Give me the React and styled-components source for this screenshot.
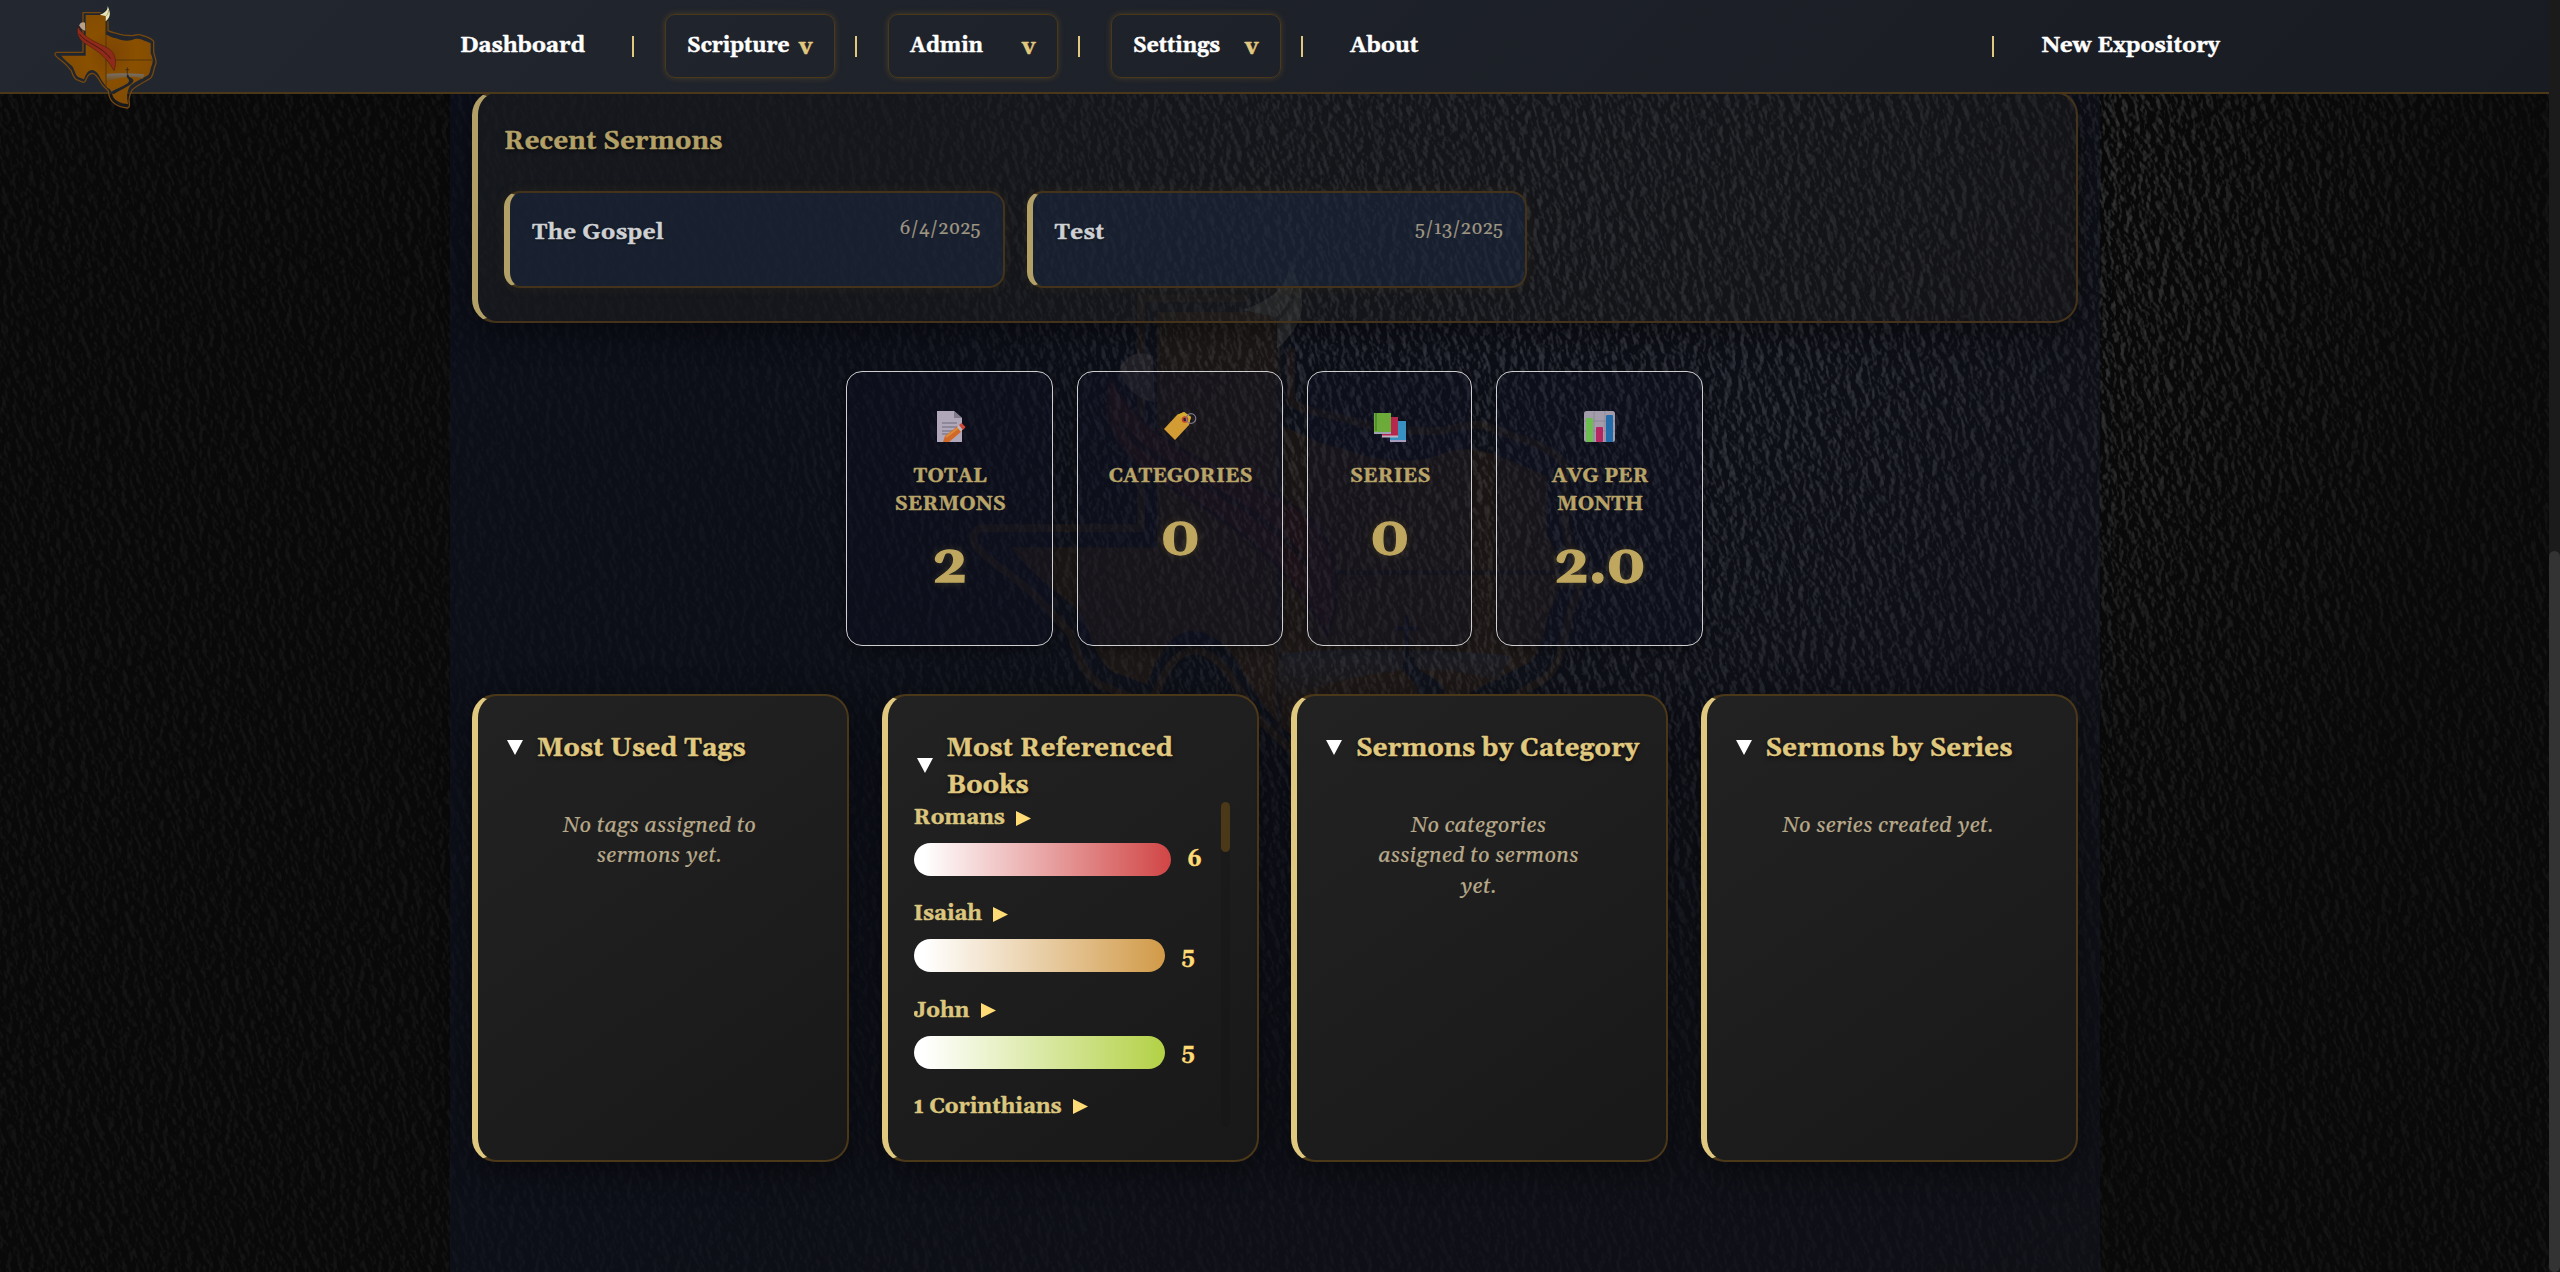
import React from 'react';
import styled, { createGlobalStyle } from 'styled-components';

const gold = '#e0c97f';
const bronze = '#4a3819';

const GlobalStyle = createGlobalStyle`
  * { box-sizing: border-box; }
  body { margin: 0; background: #090909; overflow: hidden; }
  #root { font-family: Georgia, Gelasio, "DejaVu Serif", serif; }
`;

const Page = styled.div`
  position: relative;
  display: flex;
  width: 2560px;
  height: 1272px;
  overflow: hidden;
  color: #fff;
`;

const Column = styled.div`
  position: relative;
  display: flex;
  flex-direction: column;
  width: 2549px;
  height: 1272px;
  isolation: isolate;
`;

const Leather = styled.svg`
  position: absolute;
  inset: 0;
  width: 2549px;
  height: 1272px;
  z-index: -3;
  mask-image: radial-gradient(ellipse 900px 980px at 1600px 200px, #000 0%, rgba(0,0,0,0.85) 35%, rgba(0,0,0,0.3) 78%, rgba(0,0,0,0.16) 100%);
`;

const Watermark = styled.div`
  position: absolute;
  z-index: -2;
  left: 883px;
  top: 225px;
  width: 780px;
  height: 672px;
  opacity: 0.22;
  svg { width: 100%; height: 100%; }
`;

const NavBar = styled.nav`
  position: relative;
  z-index: 2;
  flex: none;
  display: flex;
  align-items: center;
  height: 94px;
  padding: 0 329px 0 460px;
  border-bottom: 2px solid ${bronze};
  background: linear-gradient(135deg, #23272f 0%, #181b22 100%);
`;

const Brand = styled.div`
  position: absolute;
  left: 40px;
  top: 0;
  width: 130px;
  height: 116px;
  svg { width: 100%; height: 100%; }
`;

const NavLink = styled.a`
  font-size: 22px;
  font-weight: 700;
  line-height: 30px;
  padding-bottom: 1px;
  white-space: nowrap;
  -webkit-text-stroke: 0.45px currentColor;
  margin: ${p => p.$margin || 0};
`;

const Divider = styled.span`
  width: 2px;
  height: 21px;
  margin: ${p => p.$margin || '1px 30.5px 0 20.5px'};
  background: ${gold};
`;

const NavSelect = styled.div`
  display: flex;
  align-items: center;
  justify-content: space-between;
  width: 170px;
  height: 64px;
  padding: 0 21.5px 0 21.5px;
  border: 1px solid ${bronze};
  border-radius: 10px;
  box-shadow: 0 0 6px rgba(160, 120, 50, 0.32);
  font-size: 21px;
  font-weight: 700;
  line-height: 30px;
  -webkit-text-stroke: 0.45px currentColor;
`;

const SelectLabel = styled.span`
  padding-bottom: 1px;
`;

const Chevron = styled.span`
  color: ${gold};
  padding-top: 3px;
  font-size: 23px;
`;

const Main = styled.main`
  flex: 1;
  display: flex;
  flex-direction: column;
  align-items: stretch;
  width: 1650px;
  margin: -3px auto 0;
  padding: 0 22px 0 22.5px;
  background: linear-gradient(135deg, rgba(14, 20, 42, 0.46), rgba(22, 24, 38, 0.46));
`;

const RecentPanel = styled.section`
  flex: none;
  height: 232px;
  padding: 29.5px 26px;
  border: 2px solid #44331a;
  border-left: 6px solid #b3a067;
  border-radius: 24px;
  background: linear-gradient(135deg, rgba(34, 36, 34, 0.42), rgba(29, 27, 24, 0.34));
  box-shadow: 0 8px 32px rgba(0, 0, 0, 0.45);
`;

const PanelTitle = styled.h2`
  margin: 0;
  font-size: 25.6px;
  font-weight: 700;
  line-height: 37px;
  letter-spacing: 0.25px;
  color: ${p => (p.$dim ? '#b3a067' : gold)};
  text-shadow: 0 2px 4px rgba(0, 0, 0, 0.7);
  -webkit-text-stroke: 0.45px currentColor;
`;

const SermonGrid = styled.div`
  display: grid;
  grid-template-columns: repeat(3, 1fr);
  gap: 22px;
  margin-top: 31.5px;
`;

const SermonCard = styled.article`
  display: flex;
  justify-content: space-between;
  align-items: flex-start;
  height: 97px;
  padding: 22.4px 22px 0 22px;
  border: 2px solid #44331a;
  border-left: 6px solid #b3a067;
  border-radius: 16px;
  background: rgba(27, 40, 64, 0.54);
  box-shadow: 0 0 12px rgba(120, 90, 30, 0.16);
`;

const SermonTitle = styled.span`
  padding-top: 1.5px;
  font-size: 22.4px;
  font-weight: 700;
  line-height: 31px;
  letter-spacing: 0.4px;
  color: #ced0d3;
  text-shadow: 0 1px 3px rgba(0, 0, 0, 0.6);
  -webkit-text-stroke: 0.45px currentColor;
`;

const SermonDate = styled.span`
  font-size: 18.7px;
  line-height: 27px;
  color: #9f9682;
  -webkit-text-stroke: 0.2px currentColor;
`;

const StatRow = styled.section`
  display: flex;
  justify-content: center;
  gap: 24px;
  margin-top: 48px;
`;

const StatCard = styled.article`
  display: flex;
  flex-direction: column;
  align-items: center;
  width: ${p => p.$width}px;
  height: 275px;
  padding: 37px 20px 0;
  border: 1px solid #cfcfcf;
  border-radius: 16px;
  background: rgba(14, 18, 36, 0.3);
  box-shadow: 0 4px 14px rgba(0, 0, 0, 0.4);
`;

const StatIcon = styled.svg`
  width: 34px;
  height: 34px;
  opacity: 0.92;
`;

const StatLabel = styled.div`
  margin-top: 19px;
  padding-left: 1px;
  font-size: 20px;
  font-weight: 700;
  line-height: 28px;
  letter-spacing: 0.15px;
  text-align: center;
  color: #b9a468;
  -webkit-text-stroke: 0.45px currentColor;
`;

const StatValue = styled.div`
  margin-top: 15px;
  font-size: 55px;
  font-weight: 700;
  line-height: 67px;
  color: #bfa75f;
  text-shadow: 0 0 8px rgba(190, 160, 70, 0.3);
  -webkit-text-stroke: 1.3px currentColor;
`;

const InsightGrid = styled.section`
  display: grid;
  grid-template-columns: repeat(4, 1fr);
  gap: 32.5px;
  margin-top: 48px;
`;

const InsightCard = styled.article`
  display: flex;
  flex-direction: column;
  height: 468px;
  padding: 34px 26px 0;
  border: 2px solid ${bronze};
  border-left: 6px solid ${gold};
  border-radius: 24px;
  background: linear-gradient(145deg, #222222 0%, #1d1e1d 45%, #181818 100%);
  box-shadow: 0 8px 32px rgba(0, 0, 0, 0.45);
`;

const InsightHeader = styled.header`
  display: flex;
  align-items: center;
  gap: 14px;
  padding-left: 3px;
`;

const Caret = styled.svg`
  flex: none;
  width: 16px;
  height: 15px;
  margin-bottom: 3px;
  fill: #fff;
`;

const EmptyNote = styled.p`
  width: 222px;
  margin: 44px auto 0;
  position: relative;
  left: -3px;
  font-size: 21.6px;
  font-style: italic;
  line-height: 30.4px;
  letter-spacing: 0.2px;
  text-align: center;
  color: #b8a88a;
  -webkit-text-stroke: 0.2px currentColor;
`;

const BookScroller = styled.div`
  display: flex;
  justify-content: space-between;
  height: 325px;
  margin-top: -2px;
`;

const BookList = styled.div`
  flex: none;
  width: 300px;
  overflow: hidden;
`;

const ScrollTrack = styled.div`
  width: 9px;
  height: 100%;
  margin-right: 1px;
  border-radius: 5px;
  background: rgba(0, 0, 0, 0.08);
`;

const ScrollThumb = styled.div`
  height: 50px;
  border-radius: 5px;
  background: ${bronze};
`;

const Book = styled.div`
  height: 96.3px;
`;

const BookName = styled.div`
  display: flex;
  align-items: center;
  gap: 11.5px;
  padding-top: 1px;
  font-size: 21.5px;
  font-weight: 700;
  line-height: 30px;
  color: #dcc67e;
  -webkit-text-stroke: 0.45px currentColor;
`;

const PlayMark = styled.svg`
  width: 15px;
  height: 15px;
  fill: #ffdb76;
`;

const Meter = styled.div`
  display: flex;
  align-items: center;
  gap: 17px;
  margin-top: 10px;
  font-size: 22px;
  font-weight: 700;
  line-height: 30px;
  color: #ffdb76;
  -webkit-text-stroke: 0.45px currentColor;
`;

const MeterBar = styled.div`
  width: ${p => p.$width}px;
  height: 33px;
  border-radius: 16.5px;
  background: linear-gradient(90deg, #fff 4%, ${p => p.$color});
`;

const PageTrack = styled.div`
  width: 11px;
  height: 1272px;
  padding-top: 551px;
  background: #1b1b1b;
`;

const PageThumb = styled.div`
  height: 721px;
  border-radius: 6px;
  background: #333;
`;

function TexasLogo({ id }) {
  return (
    <svg viewBox="0 0 390 348" preserveAspectRatio="none">
      <defs>
        <radialGradient id={id + 'land'} gradientUnits="userSpaceOnUse" cx="215" cy="160" r="150">
          <stop offset="0" stopColor="#7b4403" />
          <stop offset="0.5" stopColor="#8a5000" />
          <stop offset="1" stopColor="#804b05" />
        </radialGradient>
        <linearGradient id={id + 'hill'} x1="0" y1="0" x2="0" y2="1">
          <stop offset="0" stopColor="#75706a" />
          <stop offset="1" stopColor="#7a4a08" />
        </linearGradient>
      </defs>
      <path
        d="M182 38H129V157H50Q43 158 46 166C54 176 70 184 80 196L94 212C98 224 100 232 108 238L130 247Q136 246 140 234C146 222 152 219 160 221C172 226 178 242 188 256L205 273C206 284 208 296 216 304C226 316 246 322 262 324Q270 322 268 310C264 294 270 282 276 270C290 256 318 244 332 234C342 224 340 204 348 190C350 180 342 166 341 154V124C334 114 316 110 306 106C296 100 288 106 276 107C262 106 250 106 240 103C226 98 214 98 204 92V64"
        fill="#20242c" fillOpacity="0.5" stroke="#74470f" strokeWidth="4" strokeLinejoin="round"
      />
      <path
        d="M137 45H197V104C208 106 216 114 228 115C244 122 262 124 276 120C292 112 304 118 318 124L332 130V160C338 172 340 182 336 194C330 206 332 216 324 226C306 236 288 244 272 256C264 266 260 280 262 298L264 312C244 312 228 304 220 292C216 284 216 276 210 268C198 262 190 248 182 236C176 222 168 212 156 210C144 210 138 222 132 238L114 231C104 222 104 208 96 198C84 188 72 178 64 167H137Z"
        fill={'url(#' + id + 'land)'}
      />
      <path d="M199 222C236 218 276 220 314 223L308 236C270 224 236 232 200 246Z" fill={'url(#' + id + 'hill)'} />
      <path d="M262 224C254 232 272 236 266 246C258 258 232 262 208 280L222 282C244 268 276 256 280 244C284 234 262 232 266 224Z" fill="#1f232b" />
      <path d="M262 202V224M256 209H268" stroke="#1f232b" strokeWidth="2" />
      <path d="M198 45V262M198 180H336" stroke="#4a3010" strokeWidth="2.5" fill="none" />
      <path d="M118 76C120 68 128 64 135 68L136 92C128 90 122 86 118 76Z" fill="#b9a08a" />
      <path d="M114 80C108 98 116 116 134 130C160 146 196 164 222 212C232 186 226 158 206 146C176 128 132 116 114 80Z" fill="#8e2a1a" stroke="#48180f" strokeWidth="1.5" />
      <path d="M118 102C136 130 186 138 212 176" stroke="#48180f" strokeWidth="3" fill="none" />
      <path d="M203 18C204 32 192 40 180 44C188 46 192 46 197 48V64C208 54 212 44 208 32Q206 24 203 18Z" fill="#e9e6b8" />
      <path d="M206 30C206 40 200 46 196 50" stroke="#8a8658" strokeWidth="2" fill="none" />
    </svg>
  );
}

const stats = [
  { label: 'TOTAL SERMONS', value: '2', width: 207, icon: 'memo' },
  { label: 'CATEGORIES', value: '0', width: 206, icon: 'tag' },
  { label: 'SERIES', value: '0', width: 165, icon: 'books' },
  { label: 'AVG PER MONTH', value: '2.0', width: 207, icon: 'chart' },
];

const iconArt = {
  memo: (
    <>
      <path d="M4 2H21L29 9V33H4Z" fill="#beb4c6" />
      <path d="M21 2L29 9H21Z" fill="#8d8496" />
      <path d="M9 14H24M9 18H24M9 22H20M9 25H15" stroke="#777184" strokeWidth="1.2" />
      <path d="M10 33L12 27L25 17L29 22L16 33Z" fill="#e0702a" />
      <path d="M13 28L25 19" stroke="#f0963c" strokeWidth="2" />
      <path d="M24 18L26 16L30 20L28 23Z" fill="#cfc6d0" />
      <path d="M26 16L28.5 14L32.5 18L30 21Z" fill="#e0503a" />
    </>
  ),
  tag: (
    <>
      <path d="M1 20L14 6L21 3L28 8L26 16L12 31Z" fill="#e2a836" />
      <path d="M14 6L21 3L28 8L26 14Z" fill="#e8b830" />
      <circle cx="22" cy="10.5" r="2.5" fill="#2a2030" stroke="#d2482c" strokeWidth="1.6" />
      <circle cx="28" cy="9.5" r="4.8" fill="none" stroke="#8a7f90" strokeWidth="1.2" />
    </>
  ),
  books: (
    <>
      <path d="M17 12H33V33H17Z" fill="#3a9cd0" />
      <path d="M17 31H33V33H17Z" fill="#b4a8cc" />
      <path d="M9 8H25V28H9Z" fill="#c42852" />
      <path d="M9 26.5H25V28.5H9Z" fill="#cdbfd0" />
      <path d="M1 4H18V25H1Z" fill="#74b83c" />
      <path d="M1 23H18V25H1Z" fill="#a8b0c0" />
      <path d="M3 4V22" stroke="#4f8f30" strokeWidth="1.5" />
    </>
  ),
  chart: (
    <>
      <rect x="1" y="2" width="31" height="31" rx="2.5" fill="#b0a8b8" />
      <path d="M1 12H32M1 22H32M11 2V33M22 2V33" stroke="#958d9e" strokeWidth="0.8" />
      <rect x="3" y="9" width="7" height="24" rx="1" fill="#74cc54" />
      <rect x="13" y="18" width="7" height="15" rx="1" fill="#c42866" />
      <rect x="23" y="6" width="7" height="27" rx="1" fill="#2474b8" />
    </>
  ),
};

const books = [
  { name: 'Romans', count: 6, width: 257, color: '#d14545' },
  { name: 'Isaiah', count: 5, width: 251, color: '#d19a48' },
  { name: 'John', count: 5, width: 251, color: '#b3d146' },
  { name: '1 Corinthians' },
];

function Insight({ title, note, children }) {
  return (
    <InsightCard>
      <InsightHeader>
        <Caret viewBox="0 0 16 15"><path d="M0 0H16L8 15Z" /></Caret>
        <PanelTitle>{title}</PanelTitle>
      </InsightHeader>
      {note && <EmptyNote>{note}</EmptyNote>}
      {children}
    </InsightCard>
  );
}

export default function App() {
  return (
    <>
      <GlobalStyle />
      <Page>
        <Column>
          <Leather>
            <filter id="grain" x="0" y="0" width="100%" height="100%" colorInterpolationFilters="sRGB">
              <feTurbulence type="fractalNoise" baseFrequency="0.15 0.1" numOctaves="3" seed="4" result="n" />
              <feDiffuseLighting in="n" surfaceScale="3.6" diffuseConstant="1" lightingColor="#fff">
                <feDistantLight azimuth="25" elevation="35" />
              </feDiffuseLighting>
              <feColorMatrix values="0 0 0 0 0.78  0 0 0 0 0.79  0 0 0 0 0.8  0.8 0 0 0 -0.38" />
            </filter>
            <g transform="rotate(-24 1275 636)">
              <rect x="-400" y="-700" width="3400" height="2700" filter="url(#grain)" />
            </g>
          </Leather>
          <Watermark><TexasLogo id="wm" /></Watermark>

          <NavBar>
            <Brand><TexasLogo id="brand" /></Brand>
            <NavLink $margin="0 26.5px 0 0">Dashboard</NavLink>
            <Divider />
            <NavSelect><SelectLabel>Scripture</SelectLabel><Chevron>v</Chevron></NavSelect>
            <Divider />
            <NavSelect><SelectLabel>Admin</SelectLabel><Chevron>v</Chevron></NavSelect>
            <Divider />
            <NavSelect><SelectLabel>Settings</SelectLabel><Chevron>v</Chevron></NavSelect>
            <Divider />
            <NavLink $margin="0 0 0 16.5px">About</NavLink>
            <Divider $margin="1px 48px 0 auto" />
            <NavLink>New Expository</NavLink>
          </NavBar>

          <Main>
            <RecentPanel>
              <PanelTitle $dim>Recent Sermons</PanelTitle>
              <SermonGrid>
                <SermonCard><SermonTitle>The Gospel</SermonTitle><SermonDate>6/4/2025</SermonDate></SermonCard>
                <SermonCard><SermonTitle>Test</SermonTitle><SermonDate>5/13/2025</SermonDate></SermonCard>
              </SermonGrid>
            </RecentPanel>

            <StatRow>
              {stats.map(s => (
                <StatCard key={s.label} $width={s.width}>
                  <StatIcon viewBox="0 0 34 34">{iconArt[s.icon]}</StatIcon>
                  <StatLabel>{s.label}</StatLabel>
                  <StatValue>{s.value}</StatValue>
                </StatCard>
              ))}
            </StatRow>

            <InsightGrid>
              <Insight title="Most Used Tags" note="No tags assigned to sermons yet." />
              <Insight title="Most Referenced Books">
                <BookScroller>
                  <BookList>
                    {books.map(b => (
                      <Book key={b.name}>
                        <BookName>
                          {b.name}
                          <PlayMark viewBox="0 0 15 15"><path d="M0 0L15 7.5L0 15Z" /></PlayMark>
                        </BookName>
                        {b.count && (
                          <Meter><MeterBar $width={b.width} $color={b.color} />{b.count}</Meter>
                        )}
                      </Book>
                    ))}
                  </BookList>
                  <ScrollTrack><ScrollThumb /></ScrollTrack>
                </BookScroller>
              </Insight>
              <Insight title="Sermons by Category" note="No categories assigned to sermons yet." />
              <Insight title="Sermons by Series" note="No series created yet." />
            </InsightGrid>
          </Main>
        </Column>
        <PageTrack><PageThumb /></PageTrack>
      </Page>
    </>
  );
}
